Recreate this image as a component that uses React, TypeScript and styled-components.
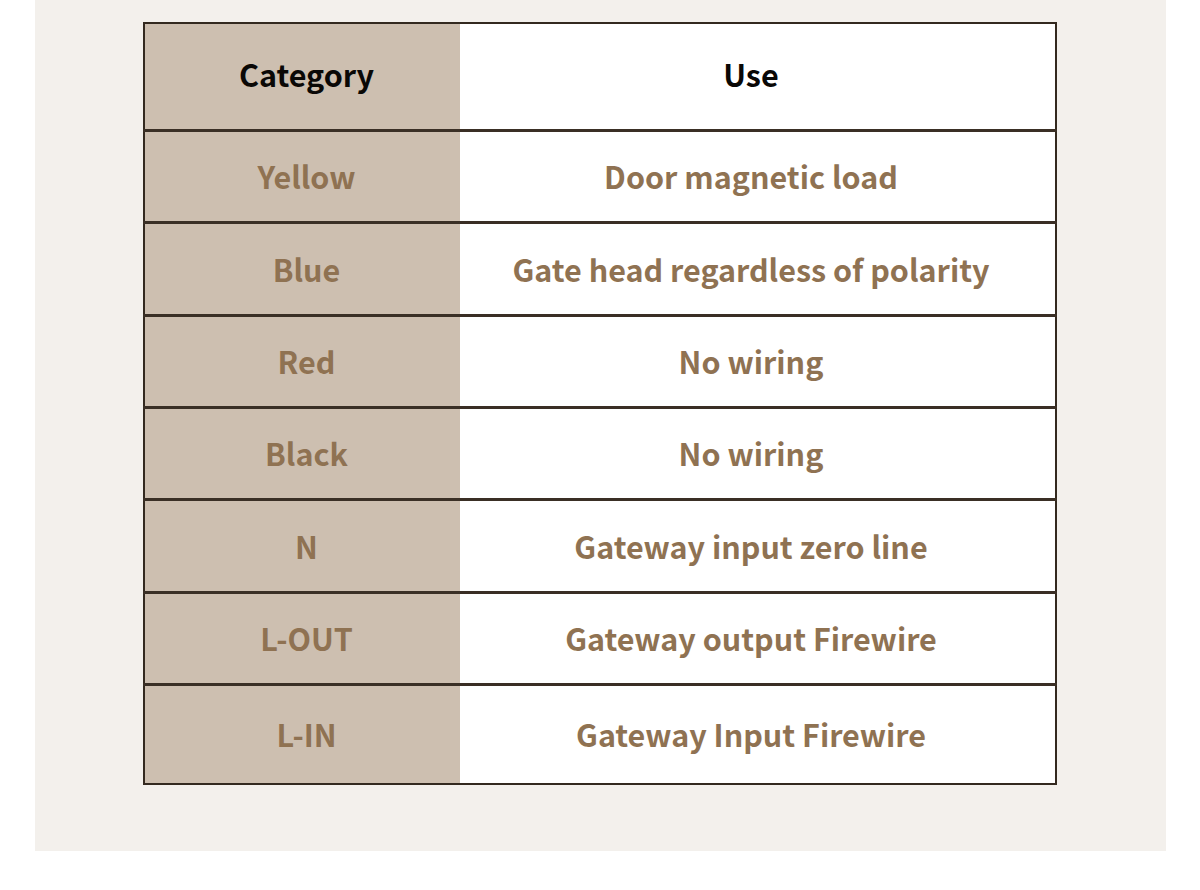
import React from "react";
import styled, { createGlobalStyle } from "styled-components";

const Global = createGlobalStyle`
  html, body { margin: 0; padding: 0; background: #ffffff; }
  body { font-family: "Noto Sans CJK SC", "Noto Sans", sans-serif; }
`;

const Page = styled.div`
  width: 1200px;
  height: 890px;
  background: #ffffff;
  padding-left: 35px;
  box-sizing: border-box;
`;

const Panel = styled.div`
  width: 1131px;
  height: 851px;
  background: #f3f0ec;
  padding-top: 22px;
  box-sizing: border-box;
  display: flex;
  justify-content: center;
`;

const Table = styled.table`
  width: 914px;
  height: 763px;
  border-collapse: collapse;
  border: 2px solid #33291f;
  margin-left: -1px;
`;

const Row = styled.tr<{ $h: number }>`
  height: ${(p) => p.$h}px;
  & + & { border-top: 3px solid #3a2f25; }
`;

const Cell = styled.td<{ $left?: boolean; $head?: boolean }>`
  padding: ${(p) => (p.$left ? "0 0 0 8px" : "0 13px 0 0")};
  text-align: center;
  vertical-align: middle;
  width: ${(p) => (p.$left ? "307px" : "auto")};
  background: ${(p) => (p.$left ? "#cdbfb0" : "#ffffff")};
  color: ${(p) => (p.$head ? "#0a0806" : "#8f7252")};
  font-family: "Noto Sans CJK SC", "Noto Sans", sans-serif;
  font-weight: 700;
  font-size: 30.5px;
  line-height: 1;
  padding-bottom: ${(p) => (p.$head ? "4px" : "0")};
`;

const rows: [string, string][] = [
  ["Yellow", "Door magnetic load"],
  ["Blue", "Gate head regardless of polarity"],
  ["Red", "No wiring"],
  ["Black", "No wiring"],
  ["N", "Gateway input zero line"],
  ["L-OUT", "Gateway output Firewire"],
  ["L-IN", "Gateway Input Firewire"],
];

export default function App() {
  return (
    <>
      <Global />
      <Page>
        <Panel>
          <div>
            <Table>
              <tbody>
                <Row $h={107}>
                  <Cell $left $head>Category</Cell>
                  <Cell $head>Use</Cell>
                </Row>
                {rows.map(([c, u], i) => (
                  <Row key={c} $h={i === rows.length - 1 ? 99 : 92}>
                    <Cell $left>{c}</Cell>
                    <Cell>{u}</Cell>
                  </Row>
                ))}
              </tbody>
            </Table>
          </div>
        </Panel>
      </Page>
    </>
  );
}
